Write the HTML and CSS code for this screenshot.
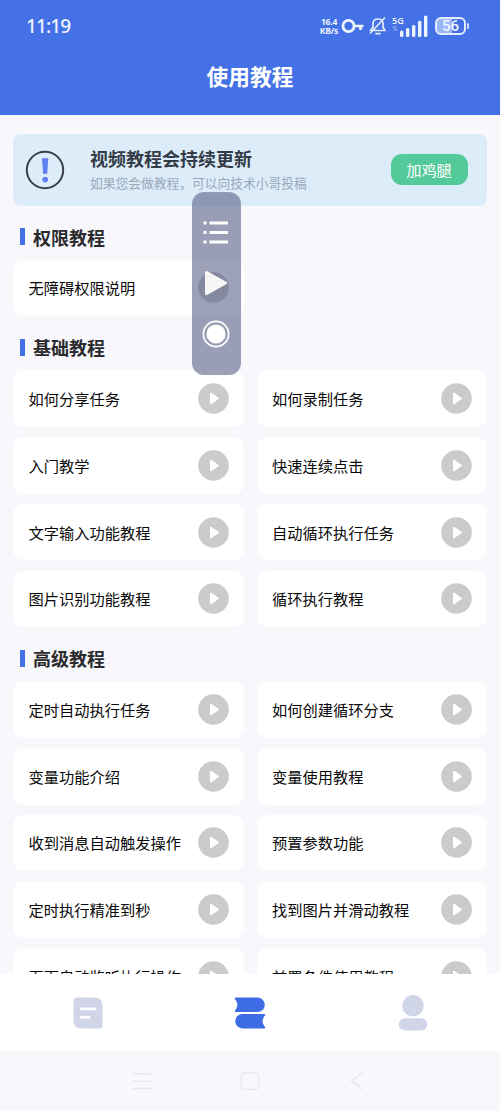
FILE: index.html
```html
<!DOCTYPE html>
<html lang="zh-CN">
<head>
<meta charset="utf-8">
<title>使用教程</title>
<link rel="stylesheet" href="styles.css">
</head>
<body>
<svg class="defs" width="0" height="0" aria-hidden="true">
  <symbol id="play" viewBox="0 0 31 31"><circle cx="15.5" cy="15.5" r="15.3" fill="#cbcbcb"/><path d="M13 10.700v9.600l6.800-4.800z" fill="#fff" stroke="#fff" stroke-width="2" stroke-linejoin="round"/></symbol>
</svg>
<div class="screen">
  <header class="header">
    <div class="status">
      <span class="clock">11:19</span>
      <div class="indicators">
        <div class="speed"><span>16.4</span><span>KB/s</span></div>
        <svg class="key" width="23" height="16" viewBox="0 0 23 16" fill="none" stroke="#eef4ff"><circle cx="7.500" cy="8" r="5.600" stroke-width="2.800"/><path d="M13 8h9.500M19.500 8v4" stroke-width="2.700"/></svg>
        <svg class="bell" width="18" height="20" viewBox="0 0 18 20" fill="none" stroke="#e4edff" stroke-width="1.700" stroke-linecap="round" stroke-linejoin="round"><path d="M1.500 14.500h14.500l-2-3.200V8c0-3-2-5-5-5S4 5 4 8v3.200zM7 17.600h4M1.500 17L15.500 2"/></svg>
        <div class="network"><span>5G</span><i>⇅</i></div>
        <svg class="bars" width="28" height="23" viewBox="0 0 28 23" fill="#eef4ff"><rect y="15.500" width="3.400" height="6.500" rx="1.500"/><rect x="6" y="13" width="3.400" height="9" rx="1.500"/><rect x="12" y="10" width="3.400" height="12" rx="1.500"/><rect x="18" y="5.800" width="3.400" height="16.200" rx="1.500"/><rect x="24" y="0.500" width="3.400" height="21.500" rx="1.500"/></svg>
        <div class="battery"><span>56</span></div>
      </div>
    </div>
    <h1 class="title">使用教程</h1>
  </header>

  <main class="content">
    <section class="notice">
      <svg class="alert" width="40" height="40" viewBox="0 0 40 40"><circle cx="20" cy="20" r="18.200" fill="none" stroke="#39404a" stroke-width="2"/><path d="M16.900 8.300h6.400l-1.100 15.500h-4.100z" fill="#607ff0"/><circle cx="20.200" cy="29.600" r="2.800" fill="#607ff0"/></svg>
      <div class="notice-text">
        <h2>视频教程会持续更新</h2>
        <p>如果您会做教程，可以向技术小哥投稿</p>
      </div>
      <button class="tip">加鸡腿</button>
    </section>

    <h3 class="section">权限教程</h3>
    <div class="grid">
      <div class="card"><span>无障碍权限说明</span><svg><use href="#play"/></svg></div>
    </div>

    <h3 class="section">基础教程</h3>
    <div class="grid">
      <div class="card"><span>如何分享任务</span><svg><use href="#play"/></svg></div>
      <div class="card"><span>如何录制任务</span><svg><use href="#play"/></svg></div>
      <div class="card"><span>入门教学</span><svg><use href="#play"/></svg></div>
      <div class="card"><span>快速连续点击</span><svg><use href="#play"/></svg></div>
      <div class="card"><span>文字输入功能教程</span><svg><use href="#play"/></svg></div>
      <div class="card"><span>自动循环执行任务</span><svg><use href="#play"/></svg></div>
      <div class="card"><span>图片识别功能教程</span><svg><use href="#play"/></svg></div>
      <div class="card"><span>循环执行教程</span><svg><use href="#play"/></svg></div>
    </div>

    <h3 class="section">高级教程</h3>
    <div class="grid">
      <div class="card"><span>定时自动执行任务</span><svg><use href="#play"/></svg></div>
      <div class="card"><span>如何创建循环分支</span><svg><use href="#play"/></svg></div>
      <div class="card"><span>变量功能介绍</span><svg><use href="#play"/></svg></div>
      <div class="card"><span>变量使用教程</span><svg><use href="#play"/></svg></div>
      <div class="card"><span>收到消息自动触发操作</span><svg><use href="#play"/></svg></div>
      <div class="card"><span>预置参数功能</span><svg><use href="#play"/></svg></div>
      <div class="card"><span>定时执行精准到秒</span><svg><use href="#play"/></svg></div>
      <div class="card"><span>找到图片并滑动教程</span><svg><use href="#play"/></svg></div>
      <div class="card"><span>页面自动监听执行操作</span><svg><use href="#play"/></svg></div>
      <div class="card"><span>前置条件使用教程</span><svg><use href="#play"/></svg></div>
    </div>
  </main>

  <nav class="tabs">
    <svg width="30" height="32" viewBox="0 0 30 32"><path d="M4 .5h17.500c5 0 8 3 8 8V28.500a3 3 0 0 1-3 3H8.500c-5 0-8-3-8-8V4A3.500 3.500 0 0 1 4 .5z" fill="#d0d5e8"/><path d="M8.200 11.900h14M8.200 20.400h8" stroke="#fff" stroke-width="2.600" stroke-linecap="round"/></svg>
    <svg width="32" height="32" viewBox="0 0 32 32" fill="#3e6ce5"><path d="M2 .5h21.500a7 7 0 0 1 0 14.600H2c-1.200 0-1.600-1-.8-1.900C4.100 9.600 4.100 6 1.200 2.400.4 1.500.8.5 2 .5z"/><path d="M30 16.900H8.500a7 7 0 0 0 0 14.600H30c1.200 0 1.600-1 .8-1.900-2.900-3.600-2.900-7.200 0-10.800.8-.9.400-1.900-.8-1.900z"/></svg>
    <svg width="30" height="36" viewBox="0 0 30 36" fill="#d0d5e8"><circle cx="15" cy="10.800" r="10.700"/><rect x=".8" y="23.200" width="28.400" height="12.400" rx="6.200"/></svg>
  </nav>
  <footer class="system">
    <svg width="20" height="20" viewBox="0 0 20 20" fill="none" stroke="#e5e5ea" stroke-width="1.300"><path d="M1 3h18M1 10.300h18M1 17.500h18"/></svg>
    <svg width="20" height="20" viewBox="0 0 20 20" fill="none" stroke="#e8e8ed" stroke-width="1.300"><rect x="1" y="2" width="18" height="16.500" rx="4"/></svg>
    <svg width="20" height="20" viewBox="0 0 20 20" fill="none" stroke="#e5e5ea" stroke-width="1.400"><path d="M14.500 2L3.500 10l11 8"/></svg>
  </footer>

  <aside class="floating">
    <svg width="26" height="24" viewBox="0 0 26 24" fill="#fff"><path d="M.5.500h3v3h-3zM6.500.500H25v3H6.500zM.5 10h3v3h-3zM6.500 10H25v3H6.500zM.5 19.500h3v3h-3zM6.500 19.500H25v3H6.500z"/></svg>
    <svg width="24" height="26" viewBox="0 0 24 26"><path d="M2.500 2.500v21L21.500 13z" fill="#f6f6f6" stroke="#f6f6f6" stroke-width="3" stroke-linejoin="round"/></svg>
    <svg width="28" height="28" viewBox="0 0 28 28"><circle cx="14" cy="14" r="12.600" fill="none" stroke="#fff" stroke-width="1.700"/><circle cx="14" cy="14" r="9.500" fill="#fff"/></svg>
  </aside>
</div>
</body>
</html>
```

FILE: styles.css
```css
* { box-sizing: border-box; }
body, h1, h2, h3, p { margin: 0; }
body { font-family: "Noto Sans CJK SC", sans-serif; background: #f7f7fc; }
svg { display: block; flex: none; }
.defs { position: absolute; }

.screen {
  position: relative;
  display: flex;
  flex-direction: column;
  width: 500px;
  height: 1111px;
  overflow: hidden;
}

.header { flex: none; height: 115px; background: #4472e6; color: #fff; }
.status {
  display: flex;
  justify-content: space-between;
  height: 52px;
  padding: 0 34px 0 26px;
  align-items: center;
  color: #eef4ff;
}
.clock { font: 500 19px/50px "Noto Sans", sans-serif; letter-spacing: -0.900px; }
.indicators { display: flex; align-items: center; height: 52px; }
.speed { width: 20px; font: 700 8.500px/9px "Open Sans", sans-serif; text-align: center; }
.speed span { display: block; white-space: nowrap; letter-spacing: -.2px; }
.key { margin-left: 2px; }
.bell { margin-left: 5px; }
.network { width: 14px; height: 20px; margin-left: 5px; font: 600 9px/9px "Open Sans", sans-serif; }
.network span, .network i { display: block; }
.network i { font: 7px/9px "DejaVu Sans", sans-serif; opacity: .5; }
.bars { margin-left: -6px; }
.battery {
  position: relative;
  width: 31px;
  height: 18px;
  margin-left: 7px;
  border: 2px solid #e4edff;
  border-radius: 6px;
  background: linear-gradient(90deg, #9db7f4 56%, transparent 56%);
  font: 500 15px/14px Roboto, sans-serif;
  text-align: center;
}
.battery::after { content: ""; position: absolute; right: -5px; top: 4px; width: 2px; height: 6px; border-radius: 1px; background: #c9d8fb; }
.title { font-size: 21.700px; font-weight: 700; line-height: 32px; padding-top: 8px; text-align: center; }

.content { flex: 1; min-height: 0; overflow: hidden; padding: 19px 13px 0 13px; }
.notice {
  display: flex;
  align-items: center;
  height: 71.500px;
  padding: 0 19.500px 0 12px;
  border-radius: 8px;
  background: #dcecf9;
}
.notice-text { flex: 1; padding-left: 25px; }
.notice-text h2 { font-size: 18px; line-height: 26px; color: #333b47; }
.notice-text p { font-size: 12.750px; line-height: 22px; color: #9aa9ba; white-space: nowrap; margin-top: 1px; }
.tip {
  width: 77px;
  height: 31px;
  padding: 0;
  border: 0;
  border-radius: 11px;
  background: #54c999;
  color: #fff;
  font: 15.200px/31px "Noto Sans CJK SC", sans-serif;
}
.section {
  display: flex;
  align-items: center;
  gap: 8.500px;
  height: 54.200px;
  padding: 8px 0 0 6.500px;
  font-size: 18px;
  line-height: 28px;
  color: #2b2b2e;
}
.section::before { content: ""; width: 5px; height: 17px; background: #4270e8; }
.grid { display: grid; grid-template-columns: 1fr 1fr; gap: 10.100px 13px; }
.card {
  display: flex;
  align-items: center;
  justify-content: space-between;
  height: 56.600px;
  padding: 0 15px 0 15.500px;
  border-radius: 10px;
  background: #fff;
  color: #080808;
  font-size: 15.250px;
  white-space: nowrap;
}
.card span { padding-bottom: 1px; }
.card svg { width: 31px; height: 31px; }

.tabs { flex: none; display: grid; grid-template-columns: repeat(3, 162.500px); justify-content: center; justify-items: center; align-items: center; height: 77px; background: #fff; }
.system { flex: none; display: grid; grid-template-columns: repeat(3, 108px); justify-content: center; justify-items: center; align-items: center; height: 60px; background: #f7f7fc; }

/* Recorder toolbar floating above the page */
.floating {
  position: absolute;
  left: 191.500px;
  top: 191.500px;
  width: 49.500px;
  height: 183.500px;
  display: flex;
  flex-direction: column;
  align-items: center;
  padding-top: 28px;
  border: 1.500px solid rgba(150, 160, 190, .75);
  border-radius: 12px;
  background: rgba(74, 82, 122, .54);
}
.floating svg:nth-child(2) { margin-top: 25px; }
.floating svg:nth-child(3) { margin-top: 24px; }
```
